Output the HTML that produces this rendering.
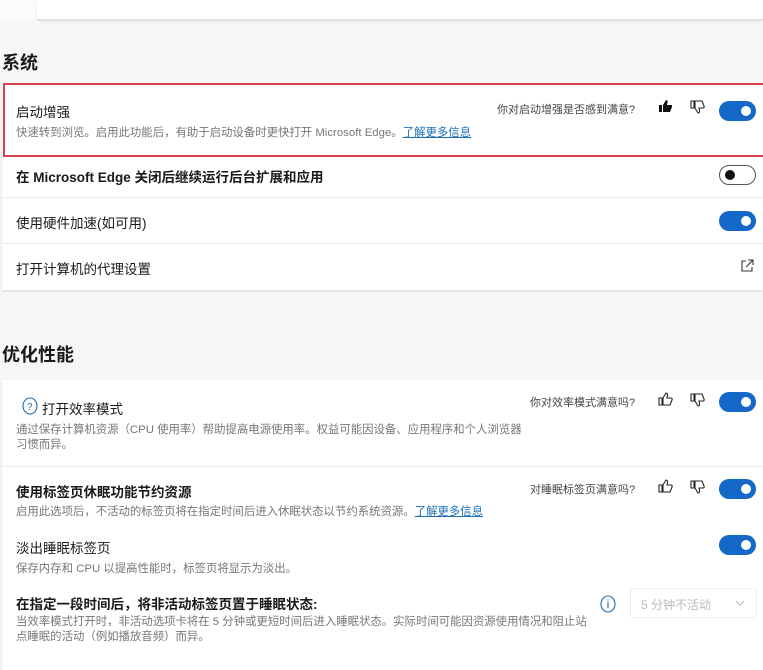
<!DOCTYPE html>
<html><head><meta charset="utf-8"><style>
*{margin:0;padding:0;box-sizing:border-box}
body{width:763px;height:660px;background:#f6f6f6;position:relative;overflow:hidden;font-family:"Liberation Sans","Noto Sans CJK SC",sans-serif;color:#1a1a1a}
.a{position:absolute;white-space:nowrap}
.h{font-size:18px;font-weight:bold}
.t{font-size:13.5px}
.d{font-size:11.4px;color:#777}
.f{font-size:11px;color:#444}
.l{color:#1b6fb5;text-decoration:underline}
.card{position:absolute;left:2px;right:0;background:#fff;box-shadow:0 1px 2px rgba(0,0,0,.12)}
.sep{position:absolute;left:2px;right:0;height:1px;background:#ececec}
.tg{position:absolute;width:37px;height:20px;border-radius:10px;background:#1468c8}
.tg:after{content:"";position:absolute;right:5px;top:5px;width:10px;height:10px;border-radius:50%;background:#fff}
.tg.off{background:#fff;border:1px solid #555}
.tg.off:after{left:5px;right:auto;top:4px;background:#111}
svg{position:absolute}
</style></head><body>
<div class="a" style="left:0;top:0;width:37px;height:20px;background:#fbfbfb"></div>
<div class="a" style="left:37px;top:0;right:0;height:20px;background:#fff;border-bottom:1px solid #ddd;box-shadow:0 1px 2px rgba(0,0,0,.1)"></div>
<div class="a h" style="left:2px;top:49px">系统</div>
<div class="card" style="top:83px;height:207px"></div>
<div class="a" style="left:3px;top:83px;right:0;height:74px;border:2px solid #d9434b;border-right:none"></div>
<div class="a t" style="left:16px;top:101px">启动增强</div>
<div class="a d" style="left:16px;top:124px">快速转到浏览。启用此功能后，有助于启动设备时更快打开 Microsoft Edge。<span class="l">了解更多信息</span></div>
<div class="a f" style="left:497px;top:101px">你对启动增强是否感到满意?</div>
<svg style="left:657px;top:98px" width="16" height="16" viewBox="0 0 16 16"><path d="M2 7h3v7H2zM6 7l3-5c1 0 2 1 1.5 2.5L10 7h4c1 0 1.5 1 1 2l-2 5H6z" fill="#111"/></svg>
<svg style="left:689px;top:99px" width="16" height="16" viewBox="0 0 16 16"><path d="M2 2h3v7H2zM6 9l3 5c1 0 2-1 1.5-2.5L10 9h4c1 0 1.5-1 1-2l-2-5H6z" fill="none" stroke="#222" stroke-width="1.1"/></svg>
<div class="tg" style="left:719px;top:101px"></div>
<div class="a t" style="left:16px;top:166px;font-weight:bold">在 Microsoft Edge 关闭后继续运行后台扩展和应用</div>
<div class="tg off" style="left:719px;top:165px"></div>
<div class="sep" style="top:197px"></div>
<div class="a t" style="left:16px;top:212px">使用硬件加速(如可用)</div>
<div class="tg" style="left:719px;top:211px"></div>
<div class="sep" style="top:243px"></div>
<div class="a t" style="left:16px;top:258px">打开计算机的代理设置</div>
<svg style="left:740px;top:259px" width="14" height="14" viewBox="0 0 14 14"><path d="M6 2H2v10h10V8M8 1h5v5M13 1 6 8" fill="none" stroke="#333" stroke-width="1.1"/></svg>
<div class="a h" style="left:2px;top:341px">优化性能</div>
<div class="card" style="top:380px;height:290px"></div>
<svg style="left:22px;top:397px" width="16" height="18" viewBox="0 0 16 18"><ellipse cx="8" cy="9" rx="7" ry="8" fill="none" stroke="#1b6fb5" stroke-width="1.1"/><text x="5" y="13" font-size="10" fill="#1b6fb5" font-family="Liberation Sans">?</text></svg>
<div class="a t" style="left:42px;top:398px">打开效率模式</div>
<div class="a d" style="left:16px;top:423px;line-height:15px">通过保存计算机资源（CPU 使用率）帮助提高电源使用率。权益可能因设备、应用程序和个人浏览器<br>习惯而异。</div>
<div class="a f" style="left:530px;top:394px">你对效率模式满意吗?</div>
<svg style="left:657px;top:391px" width="16" height="16" viewBox="0 0 16 16"><path d="M2 7h3v7H2zM6 7l3-5c1 0 2 1 1.5 2.5L10 7h4c1 0 1.5 1 1 2l-2 5H6z" fill="none" stroke="#222" stroke-width="1.1"/></svg>
<svg style="left:689px;top:392px" width="16" height="16" viewBox="0 0 16 16"><path d="M2 2h3v7H2zM6 9l3 5c1 0 2-1 1.5-2.5L10 9h4c1 0 1.5-1 1-2l-2-5H6z" fill="none" stroke="#222" stroke-width="1.1"/></svg>
<div class="tg" style="left:719px;top:392px"></div>
<div class="sep" style="top:466px"></div>
<div class="a t" style="left:16px;top:481px;font-weight:bold">使用标签页休眠功能节约资源</div>
<div class="a d" style="left:16px;top:503px">启用此选项后，不活动的标签页将在指定时间后进入休眠状态以节约系统资源。<span class="l">了解更多信息</span></div>
<div class="a f" style="left:530px;top:481px">对睡眠标签页满意吗?</div>
<svg style="left:657px;top:478px" width="16" height="16" viewBox="0 0 16 16"><path d="M2 7h3v7H2zM6 7l3-5c1 0 2 1 1.5 2.5L10 7h4c1 0 1.5 1 1 2l-2 5H6z" fill="none" stroke="#222" stroke-width="1.1"/></svg>
<svg style="left:689px;top:479px" width="16" height="16" viewBox="0 0 16 16"><path d="M2 2h3v7H2zM6 9l3 5c1 0 2-1 1.5-2.5L10 9h4c1 0 1.5-1 1-2l-2-5H6z" fill="none" stroke="#222" stroke-width="1.1"/></svg>
<div class="tg" style="left:719px;top:479px"></div>
<div class="a t" style="left:16px;top:537px">淡出睡眠标签页</div>
<div class="a d" style="left:16px;top:560px">保存内存和 CPU 以提高性能时，标签页将显示为淡出。</div>
<div class="tg" style="left:719px;top:535px"></div>
<div class="a t" style="left:16px;top:593px;font-weight:bold">在指定一段时间后，将非活动标签页置于睡眠状态:</div>
<div class="a d" style="left:16px;top:615px;line-height:15px">当效率模式打开时，非活动选项卡将在 5 分钟或更短时间后进入睡眠状态。实际时间可能因资源使用情况和阻止站<br>点睡眠的活动（例如播放音频）而异。</div>
<svg style="left:600px;top:595px" width="16" height="18" viewBox="0 0 16 18"><ellipse cx="8" cy="9" rx="7" ry="8" fill="none" stroke="#1b6fb5" stroke-width="1.1"/><path d="M8 7v6M8 4.5v1" stroke="#1b6fb5" stroke-width="1.2"/></svg>
<div class="a" style="left:630px;top:588px;width:127px;height:30px;border:1px solid #eee;border-radius:3px;font-size:12px;color:#bbb;padding:7px 10px">5 分钟不活动<svg style="left:104px;top:11px" width="10" height="7" viewBox="0 0 10 7"><path d="M1 1l4 4 4-4" fill="none" stroke="#bbb" stroke-width="1.2"/></svg></div>
</body></html>
